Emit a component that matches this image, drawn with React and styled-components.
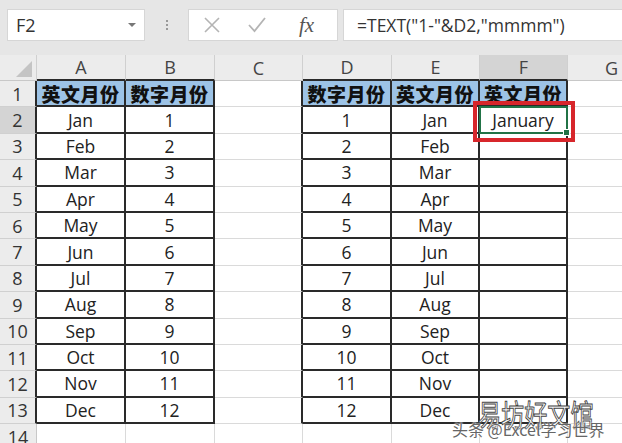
import React from "react";
import styled, { createGlobalStyle } from "styled-components";

const GlobalStyle = createGlobalStyle`
  html, body { margin:0; padding:0; background:#fff; }
  body { width:622px; height:443px; overflow:hidden; font-family:"Open Sans", "Noto Sans CJK SC", sans-serif; }
`;

const Page = styled.div`
  position:relative;
  width:622px;
  height:443px;
  overflow:hidden;
  background:#fff;
`;

const Toolbar = styled.div`
  height:55px;
  background:#e6e6e6;
  display:flex;
  align-items:flex-start;
  padding:9px 0 0 7px;
  box-sizing:border-box;
`;

const NameBox = styled.div`
  width:138px;
  height:32px;
  box-sizing:border-box;
  background:#fff;
  border:1px solid #d6d6d6;
  display:flex;
  align-items:center;
  justify-content:space-between;
  padding:0 8px 0 8px;
  font-size:18px;
  color:#333;
`;

const Caret = styled.span`
  width:0;
  height:0;
  border-left:4px solid transparent;
  border-right:4px solid transparent;
  border-top:4px solid #777;
`;

const Grip = styled.div`
  width:43px;
  height:32px;
  display:flex;
  flex-direction:column;
  align-items:center;
  justify-content:center;
  gap:2px;
  span { width:2px; height:2px; background:#999; }
`;

const FormulaButtons = styled.div`
  width:150px;
  height:32px;
  box-sizing:border-box;
  background:#fff;
  border:1px solid #d6d6d6;
  display:flex;
  align-items:center;
  padding-left:14px;
  gap:26px;
`;

const Fx = styled.span`
  font-family:"Liberation Serif", serif;
  font-style:italic;
  font-size:21px;
  color:#555;
  margin-left:6px;
`;

const FormulaInput = styled.div`
  flex:1;
  height:32px;
  margin-left:5px;
  box-sizing:border-box;
  background:#fff;
  border:1px solid #d6d6d6;
  border-right:none;
  display:flex;
  align-items:center;
  padding-left:13px;
  font-size:17.5px;
  color:#333;
  white-space:nowrap;
`;

const Sheet = styled.div`
  display:grid;
  grid-template-columns:37px 89px 89px 88px 89px 88px 88px 88px;
  grid-template-rows:26px repeat(14, 26.4px);
`;

const Corner = styled.div`
  background:#ececec;
  border-right:1px solid #d0d0d0;
  border-bottom:1px solid #c8c8c8;
  position:relative;
  &::after {
    content:"";
    position:absolute;
    right:4px;
    bottom:3px;
    border-left:16px solid transparent;
    border-bottom:16px solid #c4c4c4;
  }
`;

const ColHead = styled.div`
  background:${p => (p.$active ? "#d4d4d4" : "#ececec")};
  border-right:1px solid #d0d0d0;
  border-bottom:${p => (p.$dark ? "2px solid #2a2a2a" : "1px solid #c8c8c8")};
  display:flex;
  align-items:center;
  justify-content:center;
  font-size:18px;
  color:#444;
`;

const RowHead = styled.div`
  background:${p => (p.$active ? "#d4d4d4" : "#ececec")};
  border-right:${p => (p.$dark ? "2px solid #2a2a2a" : "1px solid #c8c8c8")};
  border-bottom:1px solid #d0d0d0;
  display:flex;
  align-items:center;
  justify-content:center;
  font-size:18px;
  color:#333;
`;

const Cell = styled.div`
  position:relative;
  background:${p => (p.$head ? "#9dc3e6" : "#fff")};
  border-right:${p => (p.$darkRight ? "2px solid #2a2a2a" : "1px solid #dadada")};
  border-bottom:${p => (p.$darkBottom ? "2px solid #2a2a2a" : "1px solid #dadada")};
  display:flex;
  align-items:center;
  justify-content:center;
  font-size:${p => (p.$head ? "19px" : "17.5px")};
  font-weight:${p => (p.$head ? 900 : 400)};
  font-family:${p => (p.$head ? '"Noto Sans CJK SC", sans-serif' : '"Open Sans", sans-serif')};
  color:${p => (p.$head ? "#111" : "#222")};
  white-space:nowrap;
  letter-spacing:${p => (p.$head ? "0.5px" : "0")};
`;

const Selection = styled.div`
  position:absolute;
  inset:-1px -2px -2px -1px;
  border:2px solid #217346;
  pointer-events:none;
  z-index:1;
  &::after {
    content:"";
    position:absolute;
    right:-4px;
    bottom:-4px;
    width:5px;
    height:5px;
    background:#217346;
    border:1px solid #fff;
  }
`;

const Highlight = styled.div`
  position:absolute;
  left:-7px;
  right:-9px;
  top:-6px;
  bottom:-10px;
  border:4px solid #d7262b;
  pointer-events:none;
  z-index:2;
`;

const Watermark = styled.div`
  position:absolute;
  left:452px;
  top:394px;
  width:170px;
  height:48px;
  pointer-events:none;
  z-index:3;
`;

const MarkTitle = styled.div`
  position:absolute;
  left:26px;
  top:0;
  font-family:"Noto Sans CJK SC", sans-serif;
  font-size:30px;
  line-height:38px;
  color:#fff;
  -webkit-text-stroke:1px #444;
  transform:scaleX(0.77);
  transform-origin:left center;
  white-space:nowrap;
`;

const MarkSub = styled.div`
  position:absolute;
  left:0;
  top:23px;
  font-family:"Noto Sans CJK SC", sans-serif;
  font-size:16px;
  color:#666;
  text-shadow:0 0 2px #fff, 0 0 2px #fff;
  white-space:nowrap;
`;

const months = ["Jan","Feb","Mar","Apr","May","Jun","Jul","Aug","Sep","Oct","Nov","Dec"];
const cols = ["A","B","C","D","E","F","G"];

// table ranges: A1:B13 and D1:F13
const inTable = (r, c) => r >= 1 && r <= 13 && (c === 0 || c === 1 || (c >= 3 && c <= 5));

const valueAt = (r, c) => {
  if (r === 1) return ["英文月份", "数字月份", "", "数字月份", "英文月份", "英文月份", ""][c];
  if (r >= 2 && r <= 13) {
    const i = r - 2;
    if (c === 0 || c === 4) return months[i];
    if (c === 1 || c === 3) return String(i + 1);
    if (c === 5 && r === 2) return "January";
  }
  return "";
};

const CrossIcon = () => (
  <svg width="18" height="18" viewBox="0 0 18 18">
    <path d="M2 2L16 16M16 2L2 16" stroke="#b4b4b4" strokeWidth="1.6" fill="none" />
  </svg>
);

const CheckIcon = () => (
  <svg width="20" height="18" viewBox="0 0 20 18">
    <path d="M2 9L7.5 15L18 2" stroke="#b4b4b4" strokeWidth="1.8" fill="none" />
  </svg>
);

export default function App() {
  const rows = Array.from({ length: 14 }, (_, i) => i + 1);
  return (
    <Page>
      <GlobalStyle />
      <Toolbar>
        <NameBox>F2<Caret /></NameBox>
        <Grip><span /><span /><span /></Grip>
        <FormulaButtons>
          <CrossIcon />
          <CheckIcon />
          <Fx>fx</Fx>
        </FormulaButtons>
        <FormulaInput>=TEXT("1-"&amp;D2,"mmmm")</FormulaInput>
      </Toolbar>
      <Sheet>
        <Corner />
        {cols.map((c, ci) => (
          <ColHead key={c} $active={c === "F"} $dark={inTable(1, ci)}>{c}</ColHead>
        ))}
        {rows.map(r => (
          <React.Fragment key={r}>
            <RowHead $active={r === 2} $dark={inTable(r, 0)}>{r}</RowHead>
            {cols.map((c, ci) => {
              const t = inTable(r, ci);
              return (
                <Cell
                  key={c}
                  $head={r === 1 && t}
                  $darkRight={t || inTable(r, ci + 1)}
                  $darkBottom={t || inTable(r + 1, ci)}
                >
                  {valueAt(r, ci)}
                  {r === 2 && c === "F" && (
                    <>
                      <Selection />
                      <Highlight />
                    </>
                  )}
                </Cell>
              );
            })}
          </React.Fragment>
        ))}
      </Sheet>
      <Watermark>
        <MarkTitle>易坊好文馆</MarkTitle>
        <MarkSub>头条 @Excel学习世界</MarkSub>
      </Watermark>
    </Page>
  );
}
